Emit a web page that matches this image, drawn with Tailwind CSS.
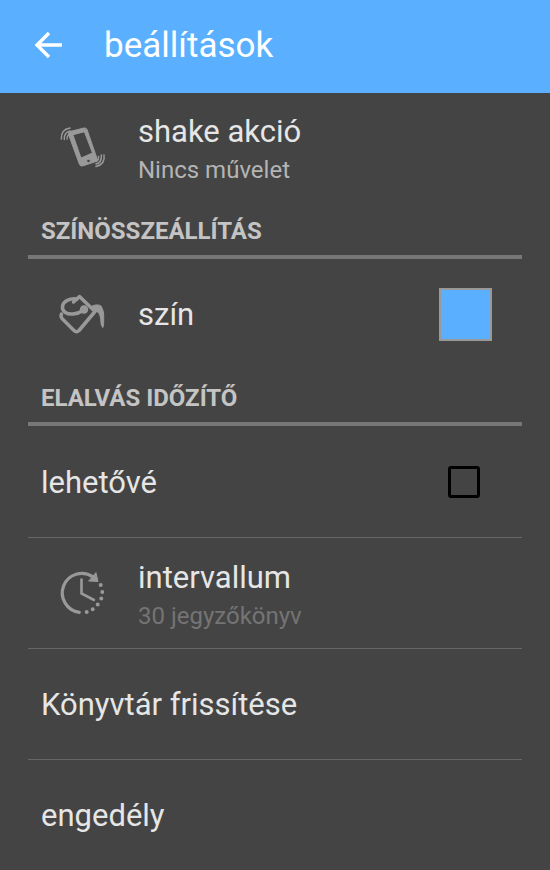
<!DOCTYPE html>
<html lang="hu">
  <head>
    <meta charset="UTF-8" />
    <meta name="viewport" content="width=device-width, initial-scale=1.0" />
    <title>beállítások</title>
    <script src="https://cdn.jsdelivr.net/npm/@tailwindcss/browser@4"></script>
  </head>
  <body class="min-h-screen bg-[#444444] font-['Roboto',sans-serif] text-[#e6e6e6]">
    <!-- App bar -->
    <header class="flex h-[93px] items-center gap-10 bg-[#5aafff] pb-[2px] pl-8 text-white">
      <button type="button" aria-label="Vissza">
        <svg class="size-8" viewBox="0 0 32 32" fill="none" stroke="currentColor" stroke-width="3.4">
          <path d="M30 15H5M17 3L5 15l12 12" />
        </svg>
      </button>
      <h1 class="text-[35px] leading-10">beállítások</h1>
    </header>

    <main class="px-7 text-[31px] leading-9">
      <!-- Shake action -->
      <button type="button" class="flex h-[109px] w-full items-center gap-7 pl-[30px] text-left">
        <svg class="size-[52px]" viewBox="0 0 52 52" fill="none" stroke="#999999" stroke-width="1.5" stroke-linecap="round">
          <path fill="#999999" stroke-width="1" stroke-linejoin="round" fill-rule="evenodd" d="M12 9.500L26 6q2-.5 3 1.500l10 29q.5 2-1 3L24.500 44q-2 .5-3-1.500l-11-30q-.5-2 1.500-3zM15 13l8 23 11.500-5L26.500 10zM30.500 37a1.800 1.800 0 1 0 0 3.600a1.800 1.800 0 0 0 0-3.600z" />
          <path d="M3.300 17C3 11 6 7 12 6M6.300 17.500C6 13 8 10 12 9M9 17c0-3 1-4 2-5" />
          <path d="M46 33c1 6-2 10-8 11.500M43.300 33c.5 5-1 8-5.300 9M40.500 34.500c.3 2-.5 4-2.500 5" />
        </svg>
        <span class="pt-1">
          <span class="block">shake akció</span>
          <span class="block pt-1 text-[24px] leading-8 text-[#b4b4b4]">Nincs művelet</span>
        </span>
      </button>

      <h2 class="flex h-[57px] items-center border-b-4 border-[#777777] px-[13px] pt-1 text-[24px] font-bold text-[#c4c4c4]">SZÍNÖSSZEÁLLÍTÁS</h2>

      <!-- Colour -->
      <button type="button" class="flex h-[110px] w-full items-center gap-7 px-[30px] text-left">
        <svg class="size-[52px]" viewBox="0 0 52 52" fill="none" stroke="#999999" stroke-width="3.500" stroke-linejoin="round" stroke-linecap="round">
          <path d="M15.500 14l6-5.500L37 23.500 21 42.500q-2.500 2.500-5 0L4 30.500q-1.500-2-.5-4.500" />
          <path d="M19 11C12 10 5 13 4.500 18.500 4 24 9 26.500 15 26c5-.3 8-2 11-4" />
          <circle cx="26" cy="21.500" r="2.500" fill="#999999" />
          <path fill="#999999" stroke-width="1" d="M34 18c3-1.500 7-1.500 9 0 2 3 3 7 2.700 12 0 4 0 7-.7 9.500-1.500-1-2-3-2-5-.3-4-.5-6-2-9-1-1.500-2-2-4-2.500z" />
        </svg>
        <span class="flex-1 pt-[2px]">szín</span>
        <span class="size-[53px] border-2 border-[#999999] bg-[#5aafff]"></span>
      </button>

      <h2 class="flex h-[57px] items-center border-b-4 border-[#777777] px-[13px] pt-1 text-[24px] font-bold text-[#c4c4c4]">ELALVÁS IDŐZÍTŐ</h2>

      <!-- Sleep timer -->
      <label class="flex h-28 items-center justify-between border-b border-[#666666] pl-[13px] pr-[42px]">
        <span class="pt-[2px]">lehetővé</span>
        <input type="checkbox" class="size-8 appearance-none rounded-[3px] border-3 border-black checked:bg-black" />
      </label>

      <button type="button" class="flex h-[111px] w-full items-center gap-7 border-b border-[#666666] pl-[30px] text-left">
        <svg class="size-[52px]" viewBox="0 0 52 52" fill="none" stroke="#999999" stroke-width="3.2" stroke-linecap="round">
          <path d="M21.300 45.300A19.500 19.500 0 1 1 35 10" />
          <path fill="#999999" stroke-width="1" stroke-linejoin="round" d="M38 6l2 8.500-9-.5z" />
          <path stroke-width="2.600" d="M23.500 12.500v14L36 33" />
          <path stroke-width="4" d="M42.700 18h.01M44.300 25h.01M43.300 31.500h.01M39.700 37.500h.01M34.700 42.300h.01M28.700 45h.01" />
        </svg>
        <span class="pt-[6px]">
          <span class="block">intervallum</span>
          <span class="block pt-1 text-[24px] leading-8 text-[#747474]">30 jegyzőkönyv</span>
        </span>
      </button>

      <button type="button" class="flex h-[111px] w-full items-center border-b border-[#666666] px-[13px] pt-[2px] text-left">Könyvtár frissítése</button>

      <button type="button" class="flex h-[110px] w-full items-center px-[13px] pt-[2px] text-left">engedély</button>
    </main>
  </body>
</html>
